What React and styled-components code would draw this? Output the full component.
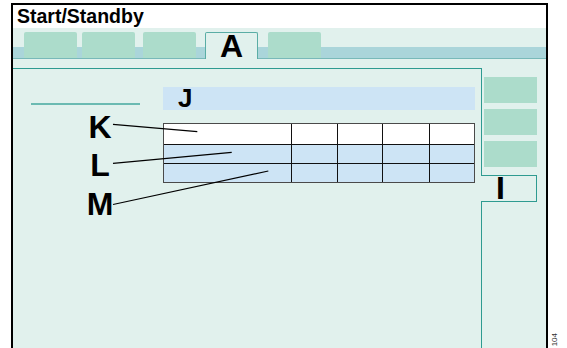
import React from 'react'
import styled, { createGlobalStyle } from 'styled-components'

const GlobalStyle = createGlobalStyle`
  html, body {
    margin: 0;
    background: #fff;
    overflow: hidden;
  }
  body {
    font-family: "Liberation Sans", Arial, sans-serif;
    color: #000;
  }
`

const LIGHT = '#e1f1ed'
const GREEN = '#acdccb'
const TEAL = '#2e9b91'
const BLUE = '#cde4f5'

const Page = styled.div`
  position: relative;
  box-sizing: border-box;
  height: 348px;
  padding: 3px 0 0 11px;
  overflow: hidden;
`

const Frame = styled.div`
  box-sizing: border-box;
  width: 537px;
  height: 360px;
  border: 2px solid #000;
  border-bottom: none;
  display: flex;
  flex-direction: column;
`

const Header = styled.div`
  height: 23px;
  line-height: 23px;
  padding-left: 4px;
  font-size: 19.5px;
  font-weight: bold;
  background: #fff;
`

const TabStrip = styled.div`
  box-sizing: border-box;
  height: 40px;
  padding-top: 4px;
  display: flex;
  align-items: flex-start;
  background: linear-gradient(
    to bottom,
    ${LIGHT} 0 19px,
    #aad5da 19px 30px,
    #78b9b9 30px 31px,
    ${LIGHT} 31px
  );
`

const Tab = styled.div`
  box-sizing: border-box;
  width: 53px;
  height: ${p => (p.$active ? '27px' : '26px')};
  margin-left: ${p => p.$offset}px;
  border-radius: 2px 2px 0 0;
  background: ${p => (p.$active ? LIGHT : GREEN)};
  border: ${p => (p.$active ? '1px solid #5aada5' : 'none')};
  border-bottom: none;
  text-align: center;
  font-size: 32px;
  font-weight: bold;
  line-height: 26px;
`

const Body = styled.div`
  flex: 1;
  display: flex;
  background: ${LIGHT};
`

const Panel = styled.div`
  position: relative;
  width: 468px;
  border-top: 1px solid ${TEAL};
  display: flex;
`

const LeftCol = styled.div`
  width: 150px;
  padding-top: 34px;
`

const Rule = styled.div`
  margin-left: 18px;
  width: 109px;
  height: 2px;
  background: #6bbab2;
`

const Labels = styled.div`
  margin: 2.5px 0 0 62px;
  width: 50px;
  text-align: center;
  font-size: 32px;
  font-weight: bold;
  line-height: 38.5px;
`

const RightCol = styled.div`
  width: 312px;
  padding-top: 18px;
`

const TitleBar = styled.div`
  height: 23px;
  padding-left: 15px;
  background: ${BLUE};
  font-size: 26px;
  font-weight: bold;
  line-height: 23px;
`

const Grid = styled.div`
  margin-top: 13px;
  display: grid;
  grid-template-columns: 127px 45px 44px 46px 44px;
  grid-template-rows: 20px 18px 18px;
  gap: 1px;
  border: 1px solid #4a4a4a;
  background: #111;
`

const Cell = styled.div`
  background: ${p => (p.$head ? '#fff' : BLUE)};
`

const Leaders = styled.svg`
  position: absolute;
  left: 0;
  top: 0;
  overflow: visible;
  pointer-events: none;
`

const Sidebar = styled.div`
  width: 64px;
  display: flex;
  flex-direction: column;
`

const SideTop = styled.div`
  box-sizing: border-box;
  height: 107px;
  padding: 9px 0 0 2px;
  border-left: 1px solid ${TEAL};
  display: flex;
  flex-direction: column;
  gap: 6px;
`

const SideButton = styled.div`
  width: 53px;
  height: 26px;
  background: ${GREEN};
`

const SideTab = styled.div`
  box-sizing: border-box;
  width: 56px;
  height: 27px;
  padding-left: 15px;
  border: 1px solid ${TEAL};
  border-left: none;
  font-size: 32px;
  font-weight: bold;
  line-height: 25px;
`

const SideRest = styled.div`
  flex: 1;
  border-left: 1px solid ${TEAL};
`

const FigureId = styled.div`
  position: absolute;
  left: 551px;
  top: 333px;
  writing-mode: vertical-rl;
  transform: rotate(180deg);
  font-size: 8px;
  line-height: 8px;
  color: #333;
`

const tabs = [
  { offset: 11 },
  { offset: 5 },
  { offset: 8 },
  { offset: 9, label: 'A' },
  { offset: 10 },
]

const leaders = [
  [100, 55.3, 184.3, 62.7],
  [100, 94.3, 218.7, 83.3],
  [100, 135.5, 255.3, 102],
]

function App () {
  const rows = [true, false, false]
  return (
    <Page>
      <GlobalStyle />
      <Frame>
        <Header>Start/Standby</Header>
        <TabStrip>
          {tabs.map((t, i) => (
            <Tab key={i} $offset={t.offset} $active={!!t.label}>{t.label}</Tab>
          ))}
        </TabStrip>
        <Body>
          <Panel>
            <LeftCol>
              <Rule />
              <Labels>
                <div>K</div>
                <div>L</div>
                <div>M</div>
              </Labels>
            </LeftCol>
            <RightCol>
              <TitleBar>J</TitleBar>
              <Grid>
                {rows.map((head, r) =>
                  [0, 1, 2, 3, 4].map(c => <Cell key={r + '-' + c} $head={head} />)
                )}
              </Grid>
            </RightCol>
            <Leaders width="468" height="160">
              {leaders.map(([x1, y1, x2, y2], i) => (
                <line key={i} x1={x1} y1={y1} x2={x2} y2={y2} stroke="#000" strokeWidth="1.2" />
              ))}
            </Leaders>
          </Panel>
          <Sidebar>
            <SideTop>
              <SideButton />
              <SideButton />
              <SideButton />
            </SideTop>
            <SideTab>I</SideTab>
            <SideRest />
          </Sidebar>
        </Body>
      </Frame>
      <FigureId>104</FigureId>
    </Page>
  )
}

export default App
